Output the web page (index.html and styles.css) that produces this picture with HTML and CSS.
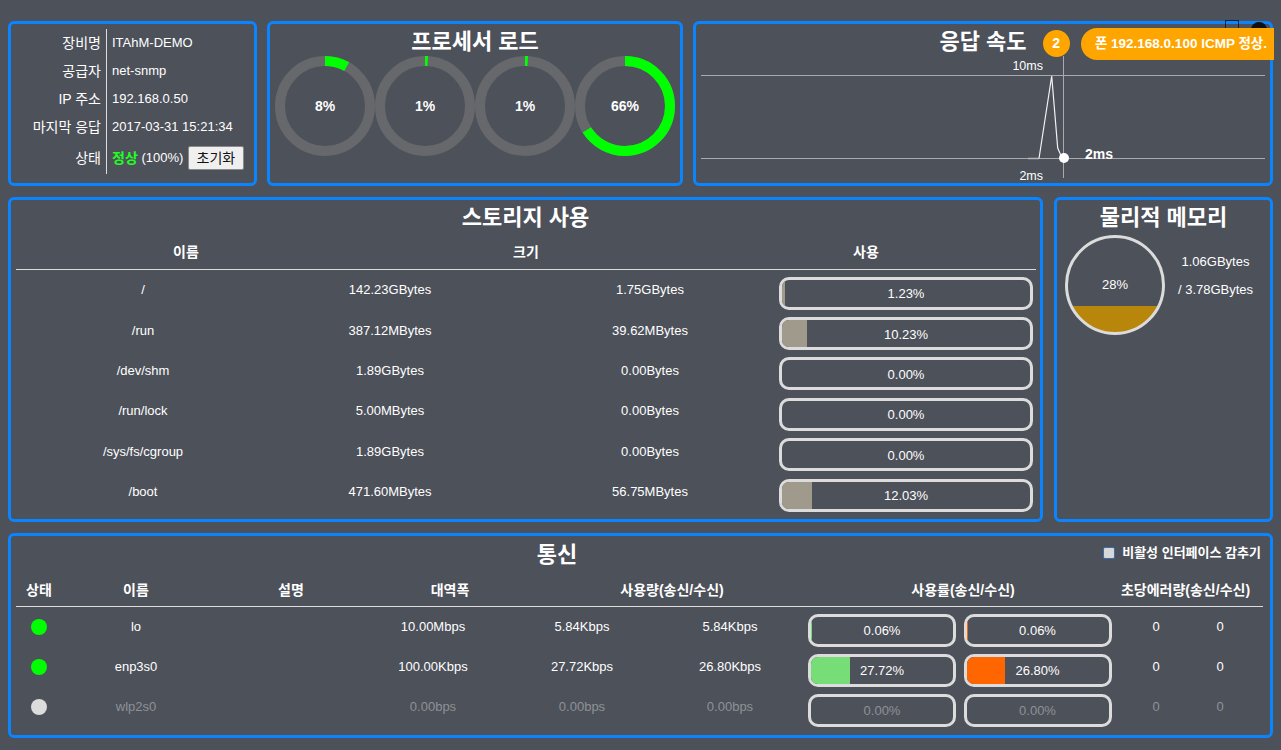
FILE: index.html
```html
<!DOCTYPE html>
<html lang="ko">
<head>
<meta charset="utf-8">
<title>ITAhM</title>
<link rel="stylesheet" href="styles.css">
</head>
<body>
<div class="page">
  <div class="row row-top">
    <section class="panel info">
      <div class="info-grid">
        <div class="k">장비명</div><div class="v">ITAhM-DEMO</div>
        <div class="k">공급자</div><div class="v">net-snmp</div>
        <div class="k">IP 주소</div><div class="v">192.168.0.50</div>
        <div class="k">마지막 응답</div><div class="v">2017-03-31 15:21:34</div>
        <div class="k">상태</div><div class="v"><b class="ok">정상</b>&nbsp;(100%)&nbsp;<button class="btn" type="button">초기화</button></div>
      </div>
    </section>

    <section class="panel cpu">
      <h2 class="title">프로세서 로드</h2>
      <div class="donuts">
        <div class="donut">
          <svg width="100" height="100" viewBox="0 0 100 100"><circle class="track" cx="50" cy="50" r="45"/><circle class="prog" cx="50" cy="50" r="45" stroke-dasharray="22.62 400" transform="rotate(-90 50 50)"/></svg>
          <span>8%</span>
        </div>
        <div class="donut">
          <svg width="100" height="100" viewBox="0 0 100 100"><circle class="track" cx="50" cy="50" r="45"/><circle class="prog" cx="50" cy="50" r="45" stroke-dasharray="2.83 400" transform="rotate(-90 50 50)"/></svg>
          <span>1%</span>
        </div>
        <div class="donut">
          <svg width="100" height="100" viewBox="0 0 100 100"><circle class="track" cx="50" cy="50" r="45"/><circle class="prog" cx="50" cy="50" r="45" stroke-dasharray="2.83 400" transform="rotate(-90 50 50)"/></svg>
          <span>1%</span>
        </div>
        <div class="donut">
          <svg width="100" height="100" viewBox="0 0 100 100"><circle class="track" cx="50" cy="50" r="45"/><circle class="prog" cx="50" cy="50" r="45" stroke-dasharray="186.61 400" transform="rotate(-90 50 50)"/></svg>
          <span>66%</span>
        </div>
      </div>
    </section>

    <section class="panel resp">
      <svg class="chart" width="574" height="159" viewBox="0 0 574 159">
        <line class="grid-line" x1="5" y1="51.5" x2="569" y2="51.5"/>
        <line class="grid-line" x1="5" y1="134.5" x2="569" y2="134.5"/>
        <line class="grid-line" x1="367.5" y1="32" x2="367.5" y2="154"/>
        <polyline class="flat" points="332,134.5 343,134.5"/>
        <polyline class="trace" points="343,134.5 355.7,52 361.7,124 364.7,131 368,134"/>
        <circle class="dot" cx="368" cy="134" r="5"/>
        <text class="ax" x="347" y="45.5" text-anchor="end">10ms</text>
        <text class="ax" x="347" y="155.5" text-anchor="end">2ms</text>
        <text class="ax-cur" x="389" y="135">2ms</text>
      </svg>
      <h2 class="title"><span class="title-text">응답 속도<span class="badge">2</span></span></h2>
    </section>
  </div>

  <div class="row row-mid">
    <section class="panel storage">
      <h2 class="title">스토리지 사용</h2>
      <div class="st-table">
        <div class="st-head"><div>이름</div><div>크기</div><div>사용</div></div>
        <div class="st-row"><div class="txt">/</div><div class="txt">142.23GBytes</div><div class="txt used">1.75GBytes</div><div class="bar"><i class="fill gray" style="width:1.23%"></i><span>1.23%</span></div></div>
        <div class="st-row"><div class="txt">/run</div><div class="txt">387.12MBytes</div><div class="txt used">39.62MBytes</div><div class="bar"><i class="fill gray" style="width:10.23%"></i><span>10.23%</span></div></div>
        <div class="st-row"><div class="txt">/dev/shm</div><div class="txt">1.89GBytes</div><div class="txt used">0.00Bytes</div><div class="bar"><i class="fill gray" style="width:0%"></i><span>0.00%</span></div></div>
        <div class="st-row"><div class="txt">/run/lock</div><div class="txt">5.00MBytes</div><div class="txt used">0.00Bytes</div><div class="bar"><i class="fill gray" style="width:0%"></i><span>0.00%</span></div></div>
        <div class="st-row"><div class="txt">/sys/fs/cgroup</div><div class="txt">1.89GBytes</div><div class="txt used">0.00Bytes</div><div class="bar"><i class="fill gray" style="width:0%"></i><span>0.00%</span></div></div>
        <div class="st-row"><div class="txt">/boot</div><div class="txt">471.60MBytes</div><div class="txt used">56.75MBytes</div><div class="bar"><i class="fill gray" style="width:12.03%"></i><span>12.03%</span></div></div>
      </div>
    </section>

    <section class="panel memory">
      <h2 class="title">물리적 메모리</h2>
      <div class="mem-body">
        <div class="mem-circle"><span>28%</span></div>
        <div class="mem-text">
          <div>1.06GBytes</div>
          <div>/ 3.78GBytes</div>
        </div>
      </div>
    </section>
  </div>

  <section class="panel comm">
    <div class="comm-head">
      <h2 class="title comm-title">통신</h2>
      <label class="hide-opt"><input type="checkbox" class="chk"><span>비활성 인터페이스 감추기</span></label>
    </div>
    <div class="cm-table">
      <div class="cm-head">
        <div class="h-state">상태</div>
        <div class="h-name">이름</div>
        <div class="h-desc">설명</div>
        <div class="h-bw">대역폭</div>
        <div class="h-use">사용량(송신/수신)</div>
        <div class="h-rate">사용률(송신/수신)</div>
        <div class="h-err">초당에러량(송신/수신)</div>
      </div>
      <div class="cm-row">
        <div class="cell"><i class="led on"></i></div>
        <div class="cell txt">lo</div>
        <div class="cell txt"></div>
        <div class="cell txt">10.00Mbps</div>
        <div class="cell txt">5.84Kbps</div>
        <div class="cell txt rx">5.84Kbps</div>
        <div class="cell"><div class="bar sm"><i class="fill green" style="width:0.06%"></i><span>0.06%</span></div></div>
        <div class="cell"><div class="bar sm"><i class="fill orange" style="width:0.06%"></i><span>0.06%</span></div></div>
        <div class="cell txt">0</div>
        <div class="cell txt">0</div>
        <div class="cell"></div>
      </div>
      <div class="cm-row">
        <div class="cell"><i class="led on"></i></div>
        <div class="cell txt">enp3s0</div>
        <div class="cell txt"></div>
        <div class="cell txt">100.00Kbps</div>
        <div class="cell txt">27.72Kbps</div>
        <div class="cell txt rx">26.80Kbps</div>
        <div class="cell"><div class="bar sm"><i class="fill green" style="width:27.72%"></i><span>27.72%</span></div></div>
        <div class="cell"><div class="bar sm"><i class="fill orange" style="width:26.80%"></i><span>26.80%</span></div></div>
        <div class="cell txt">0</div>
        <div class="cell txt">0</div>
        <div class="cell"></div>
      </div>
      <div class="cm-row off">
        <div class="cell"><i class="led"></i></div>
        <div class="cell txt">wlp2s0</div>
        <div class="cell txt"></div>
        <div class="cell txt">0.00bps</div>
        <div class="cell txt">0.00bps</div>
        <div class="cell txt rx">0.00bps</div>
        <div class="cell"><div class="bar sm"><i class="fill green" style="width:0%"></i><span>0.00%</span></div></div>
        <div class="cell"><div class="bar sm"><i class="fill orange" style="width:0%"></i><span>0.00%</span></div></div>
        <div class="cell txt">0</div>
        <div class="cell txt">0</div>
        <div class="cell"></div>
      </div>
    </div>
  </section>
</div>

<div class="corner-tools"><i class="tool-square"></i><i class="tool-circle"></i></div>
<div class="toast">폰 192.168.0.100 ICMP 정상.</div>
</body>
</html>
```

FILE: styles.css
```css
* { box-sizing: border-box; margin: 0; padding: 0; }
html { background: #4d515a; }
body {
  margin: 8px;
  background: #4d515a;
  color: #fff;
  font-family: "Liberation Sans", "Noto Sans CJK KR", sans-serif;
  font-size: 13px;
  line-height: 18px;
}
.page { padding-top: 13px; display: flex; flex-direction: column; gap: 11px; }
.row { display: flex; }
.row-top { height: 165px; gap: 10px; }
.row-mid { height: 325px; gap: 11px; }

.panel {
  border: 3px solid #0a84ff;
  border-radius: 6px;
  position: relative;
}
.title {
  font-size: 22px;
  line-height: 24px;
  font-weight: bold;
  text-align: center;
  color: #fff;
}

/* info panel */
.info { width: 249px; padding-top: 5px; }
.info-grid {
  display: grid;
  grid-template-columns: 95px 1fr;
  grid-template-rows: 28px 28px 28px 28px 33px;
}
.k { display: flex; align-items: center; justify-content: flex-end; padding-right: 5px; white-space: nowrap; font-size: 14px; }
.v { display: flex; align-items: center; border-left: 1px solid #ddd; padding-left: 5px; white-space: nowrap; }
.ok { color: #22ff22; font-weight: bold; font-size: 14px; }
.btn {
  width: 56px; height: 24px;
  margin-left: 1px;
  background: #efefef;
  border: 1px solid #8a8a8a;
  border-radius: 2px;
  color: #111;
  font-family: inherit;
  font-size: 14px;
  line-height: 20px;
}

/* cpu */
.cpu { width: 416px; padding-top: 6px; }
.donuts { display: flex; justify-content: center; margin-top: 2px; }
.donut { display: grid; place-items: center; width: 100px; height: 100px; }
.donut svg, .donut span { grid-area: 1 / 1; }
.donut span { font-size: 14px; font-weight: bold; }
.track { fill: none; stroke: #67686c; stroke-width: 10; }
.prog { fill: none; stroke: #00ff00; stroke-width: 10; }

/* response */
.resp { flex: 1; padding-top: 6px; }
.chart { position: absolute; left: 0; top: 0; }
.grid-line { stroke: #a9aaad; stroke-width: 1; }
.flat { fill: none; stroke: #b8b8b8; stroke-width: 1.5; }
.trace { fill: none; stroke: #f2f2f2; stroke-width: 1.2; }
.dot { fill: #fff; }
.ax { font-family: "Liberation Sans", sans-serif; font-size: 12.5px; fill: #fff; }
.ax-cur { font-family: "Liberation Sans", sans-serif; font-size: 14px; font-weight: bold; fill: #fff; }
.resp .title { position: relative; }
.title-text { position: relative; }
.badge {
  position: absolute;
  left: calc(100% + 16px);
  top: 1px;
  width: 27px; height: 27px;
  border-radius: 50%;
  background: #ffa500;
  color: #fff;
  font-family: "Liberation Sans", sans-serif;
  font-size: 14px;
  line-height: 27px;
  text-align: center;
  font-weight: bold;
}

/* storage */
.storage { width: 1035px; padding-top: 6px; }
.st-table { margin: 0 4px 0 5px; }
.st-head {
  display: grid;
  grid-template-columns: 1fr 1fr 1fr;
  text-align: center;
  font-weight: bold;
  font-size: 14px;
  padding: 13px 0 8px;
  border-bottom: 1px solid #dcdcdc;
  margin-bottom: 3px;
}
.st-row {
  display: grid;
  grid-template-columns: 254px 240px 266px 260px;
  height: 40.4px;
  align-items: center;
}
.txt { text-align: center; padding-bottom: 6px; white-space: nowrap; }
.used { padding-left: 14px; }

.bar {
  display: grid;
  height: 33px;
  border: 3px solid #dcdcdc;
  border-radius: 10px;
  overflow: hidden;
  margin: 0 3px;
}
.bar .fill, .bar span { grid-area: 1 / 1; }
.fill { display: block; height: 100%; justify-self: start; }
.fill.gray { background: #a09a8c; }
.fill.green { background: #77dd77; }
.fill.orange { background: #ff6600; }
.bar span { align-self: center; text-align: center; padding-top: 2px; }

/* memory */
.memory { flex: 1; padding-top: 6px; }
.mem-body { display: flex; margin-top: 5px; }
.mem-circle {
  width: 100px; height: 100px;
  margin-left: 8px;
  border: 3px solid #dcdcdc;
  border-radius: 50%;
  background: linear-gradient(to top, #b8860b 28%, transparent 28%);
  display: flex; align-items: center; justify-content: center;
}
.mem-text { flex: 1; padding: 13px 4px 0 0; text-align: center; line-height: 28px; }

/* comm */
.comm { height: 205px; padding-top: 7px; }
.comm-head { display: flex; }
.comm-title { flex: 1; }
.hide-opt {
  display: flex; align-items: center; gap: 7px;
  align-self: flex-start;
  margin: 1px 9px 0 0;
  font-size: 13px;
  font-weight: bold;
}
.chk {
  appearance: none;
  -webkit-appearance: none;
  width: 12px; height: 12px;
  background: #d8d8d8;
  border: 1.5px solid #3d6fae;
  border-radius: 2px;
}
.cm-table { margin: 0 7px 0 5px; }
.cm-head, .cm-row {
  display: grid;
  grid-template-columns: 46px 148px 162px 122px 176px 134px 156px 155px 82px 46px 20px;
}
.cm-head {
  font-weight: bold;
  font-size: 14px;
  text-align: center;
  padding: 14px 0 7px;
  border-bottom: 1px solid #dcdcdc;
  margin-bottom: 3px;
  white-space: nowrap;
}
.h-bw { padding-left: 34px; }
.h-use { grid-column: 5 / 7; padding-left: 46px; }
.h-rate { grid-column: 7 / 9; padding-left: 7px; }
.h-err { grid-column: 9 / 12; padding-right: 7px; }
.cm-row { height: 40px; align-items: center; }
.cell { display: flex; justify-content: center; align-items: center; }
.cell.txt { padding-bottom: 6px; }
.rx { padding-right: 14px; }
.bar.sm { width: 148px; margin: 0; }
.led { display: block; width: 16px; height: 16px; border-radius: 50%; background: #dcdcdc; margin-bottom: 6px; }
.led.on { background: #00ff00; }
.cm-row.off .txt, .cm-row.off .bar span { color: #8e9196; }

/* overlays */
.corner-tools { position: fixed; top: 20px; right: 14px; display: flex; align-items: flex-start; gap: 12px; }
.tool-square { display: block; width: 14px; height: 14px; border: 1.5px solid #1b1f2b; }
.tool-circle { display: block; width: 16px; height: 16px; margin-top: 2px; border-radius: 50%; background: #111; }
.toast {
  position: fixed;
  top: 28px;
  right: 7px;
  height: 32px;
  padding: 0 7px 0 14px;
  background: #ffa500;
  border-radius: 16px 0 0 16px;
  color: #fff;
  font-size: 13.5px;
  font-weight: bold;
  line-height: 32px;
  white-space: nowrap;
}
```
